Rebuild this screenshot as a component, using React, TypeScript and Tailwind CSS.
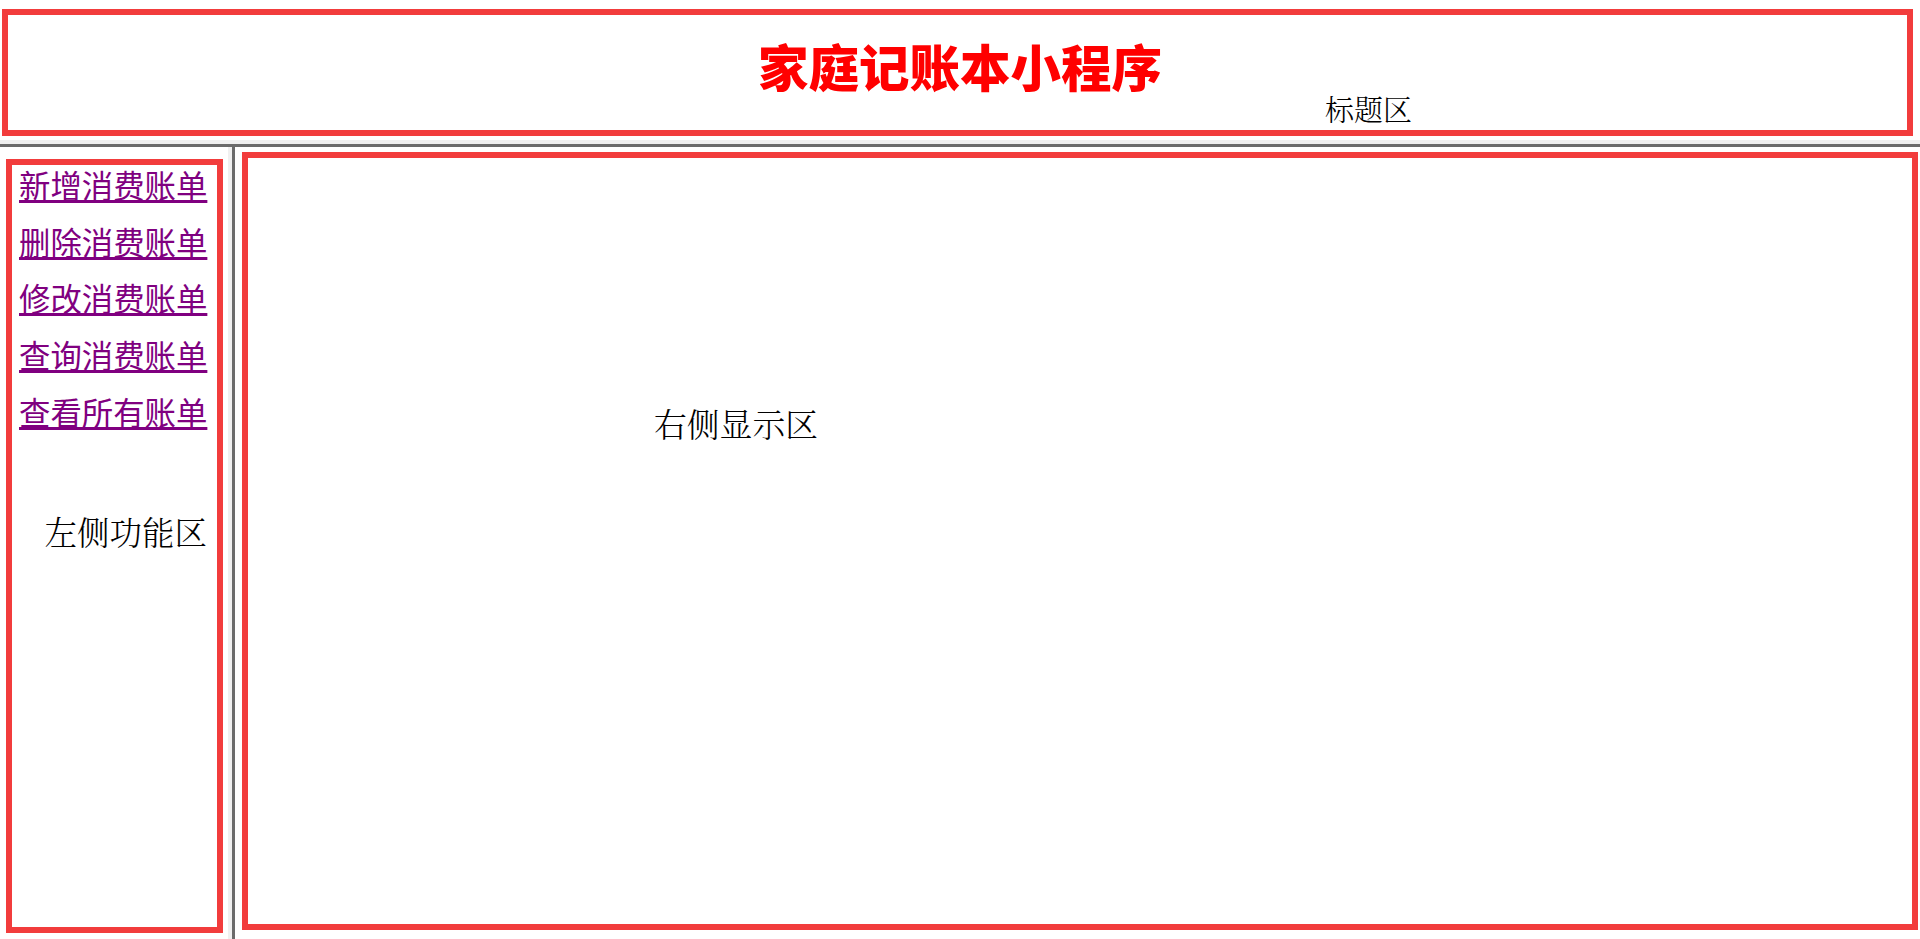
import React from "react";

const sans = '"Noto Sans CJK SC", "Noto Sans", sans-serif';
const serif = '"Noto Serif CJK SC", "Liberation Serif", "Noto Sans CJK SC", serif';

const links = ["新增消费账单", "删除消费账单", "修改消费账单", "查询消费账单", "查看所有账单"];

export default function App() {
  return (
    <div className="w-[1920px] h-[939px] bg-white overflow-hidden flex flex-col">
      {/* top frame */}
      <div className="h-[140px] shrink-0 relative">
        <div className="ml-[2px] mt-[9px] w-[1911px] h-[127px] border-[6px] border-[#f23c3c] flex flex-col">
          <div
            className="mt-[25px] pl-[5px] text-center text-[50.5px] leading-none font-black text-[#ff0000]"
            style={{ fontFamily: sans }}
          >
            家庭记账本小程序
          </div>
          <div
            className="mt-[3px] ml-[1317px] text-[29px] leading-none text-black font-light"
            style={{ fontFamily: serif }}
          >
            标题区
          </div>
        </div>
      </div>
      <div className="h-[4px] shrink-0 bg-[#f0f0f0]" />
      <div className="h-[3px] shrink-0 bg-[#6b6b6b]" />
      {/* bottom frames */}
      <div className="flex-1 flex flex-row">
        <div className="w-[228px] shrink-0">
          <div className="ml-[6px] mt-[12px] w-[217px] h-[774px] border-[6px] border-[#f23c3c] flex flex-col">
            <div className="pt-[4px] pl-[7px] flex flex-col gap-[25.3px]">
              {links.map((t) => (
                <a
                  key={t}
                  href="#"
                  className="block text-[31.4px] leading-none text-[#800080] underline"
                  style={{ fontFamily: sans }}
                >
                  {t}
                </a>
              ))}
            </div>
            <div
              className="mt-[88px] self-end mr-[10px] text-[32.5px] leading-none text-black font-light"
              style={{ fontFamily: serif }}
            >
              左侧功能区
            </div>
          </div>
        </div>
        <div className="w-[4px] shrink-0 bg-[#f0f0f0]" />
        <div className="w-[3px] shrink-0 bg-[#6b6b6b]" />
        <div className="flex-1">
          <div className="ml-[7px] mt-[5px] w-[1676px] h-[778px] border-[6px] border-[#f23c3c]">
            <div
              className="ml-[406px] mt-[249px] text-[32.8px] leading-none text-black font-light"
              style={{ fontFamily: serif }}
            >
              右侧显示区
            </div>
          </div>
        </div>
      </div>
    </div>
  );
}
